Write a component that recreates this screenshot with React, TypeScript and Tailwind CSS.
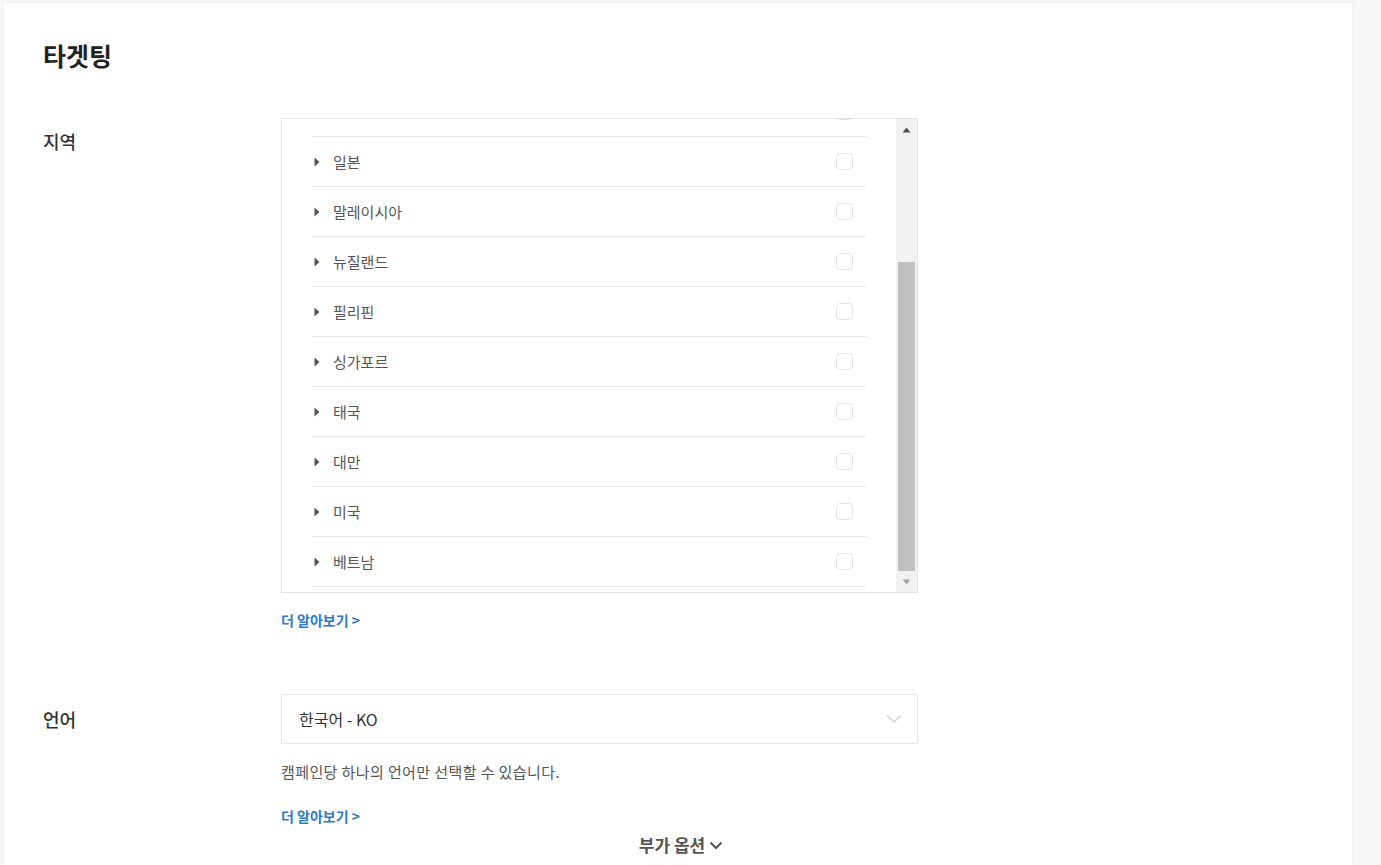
import React from "react";

const font = { fontFamily: '"Noto Sans CJK KR", "Noto Sans", sans-serif' };

const countries = ["", "일본", "말레이시아", "뉴질랜드", "필리핀", "싱가포르", "태국", "대만", "미국", "베트남", ""];

function Row({ name }: { name: string }) {
  return (
    <div className="h-[50px] border-b border-[#e6e6e6] flex items-center">
      <svg width="6" height="10" viewBox="0 0 6 10" className="ml-[2px] mr-[13px]">
        <path d="M0.5 0.5 L5.5 5 L0.5 9.5 Z" fill="#555" />
      </svg>
      <span className="text-[15px] text-[#555] leading-none">{name}</span>
      <div className="ml-auto mr-[13px] w-[17px] h-[17px] rounded-[4px] border border-[#e3e3e3] bg-white" />
    </div>
  );
}

export default function App() {
  return (
    <div className="min-h-screen bg-[#f7f7f7] pt-[3px] pl-[4px]" style={font}>
      <div className="w-[1348px] min-h-[862px] bg-white shadow-[0_0_3px_rgba(0,0,0,0.08)] pl-[39px] pt-[36px]">
        <h1 className="text-[25px] leading-[32px] font-bold text-[#222]">타겟팅</h1>

        <div className="flex mt-[47px]">
          <div className="w-[238px] h-[46px] flex items-center text-[18px] font-medium text-[#333]">지역</div>
          <div className="w-[637px]">
            <div className="h-[475px] border border-[#e3e3e3] flex overflow-hidden">
              <div className="flex-1 overflow-hidden px-[30px]">
                <div className="-mt-[32px]">
                  {countries.map((c, i) => (
                    <Row key={i} name={c} />
                  ))}
                </div>
              </div>
              <div className="w-[21px] bg-[#f1f1f1] flex flex-col items-center">
                <div className="h-[22px] flex items-center justify-center">
                  <svg width="9" height="6" viewBox="0 0 9 6">
                    <path d="M0.5 5.5 L4.5 0.5 L8.5 5.5 Z" fill="#505050" />
                  </svg>
                </div>
                <div className="h-[121px]" />
                <div className="w-[17px] h-[309px] bg-[#c1c1c1]" />
                <div className="flex-1 flex items-center justify-center">
                  <svg width="9" height="6" viewBox="0 0 9 6">
                    <path d="M0.5 0.5 L8.5 0.5 L4.5 5.5 Z" fill="#a3a3a3" />
                  </svg>
                </div>
              </div>
            </div>
            <a className="block mt-[17px] text-[14px] leading-[20px] font-bold text-[#2b7bc9]">더 알아보기 &gt;</a>
          </div>
        </div>

        <div className="flex mt-[64px]">
          <div className="w-[238px] h-[50px] flex items-center text-[18px] font-medium text-[#333]">언어</div>
          <div className="w-[637px]">
            <div className="h-[50px] border border-[#e6e6e6] rounded-[2px] flex items-center pl-[17px] pr-[15px]">
              <span className="text-[16px] text-[#333]">한국어 - KO</span>
              <svg width="16" height="10" viewBox="0 0 16 10" className="ml-auto">
                <path d="M1 1.5 L8 8 L15 1.5" fill="none" stroke="#d4d4d4" strokeWidth="1.6" />
              </svg>
            </div>
            <p className="mt-[18px] text-[15px] leading-[20px] tracking-[0.4px] text-[#555]">캠페인당 하나의 언어만 선택할 수 있습니다.</p>
            <a className="block mt-[24px] text-[14px] leading-[20px] font-bold text-[#2b7bc9]">더 알아보기 &gt;</a>
          </div>
        </div>

        <div className="w-[1276px] flex justify-center mt-[7px]">
          <div className="flex items-center gap-[4px] text-[17px] leading-[24px] font-bold text-[#555]">
            부가 옵션
            <svg width="14" height="9" viewBox="0 0 14 9">
              <path d="M1.5 1.5 L7 7 L12.5 1.5" fill="none" stroke="#555" strokeWidth="2" />
            </svg>
          </div>
        </div>
      </div>
    </div>
  );
}
